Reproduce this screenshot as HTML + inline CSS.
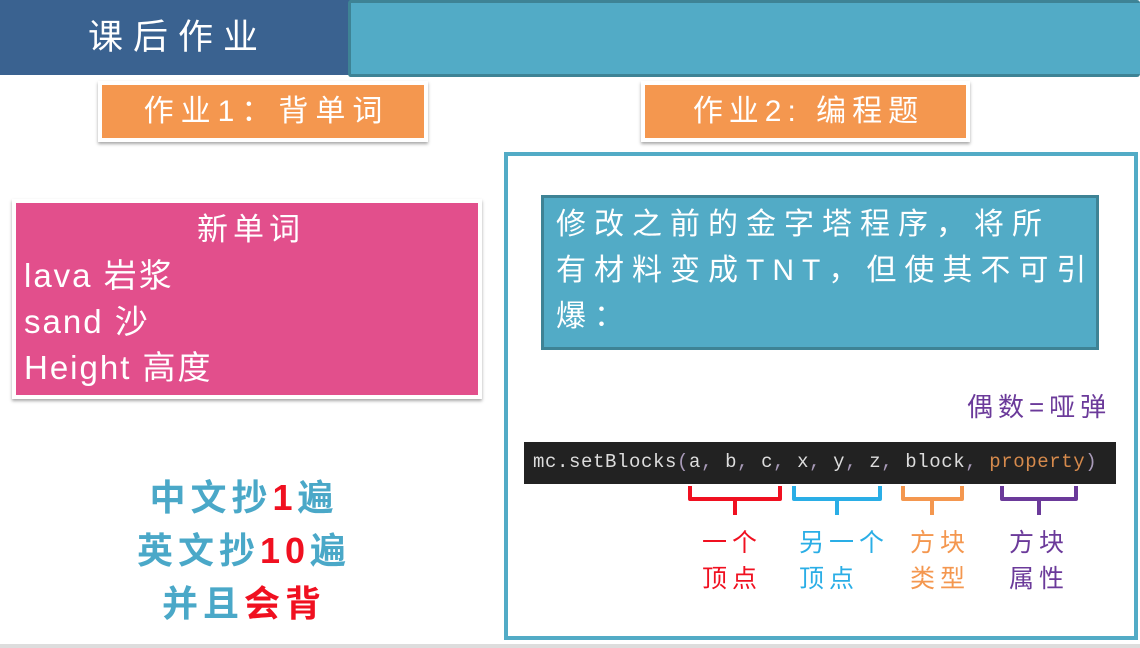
<!DOCTYPE html>
<html><head><meta charset="utf-8"><style>
*{margin:0;padding:0;box-sizing:border-box}
body{width:1140px;height:648px;position:relative;background:#fff;overflow:hidden;font-family:"Liberation Sans","Noto Sans CJK SC",sans-serif}
.a{position:absolute}
</style></head><body>
<div class="a" style="left:0;top:0;width:352px;height:75px;background:#3a6290"></div>
<div class="a" style="left:88px;top:16px;font-size:35px;color:#fff;letter-spacing:10px;line-height:44px">课后作业</div>
<div class="a" style="left:348px;top:0;width:792px;height:77px;background:#52abc6;border:3px solid #3e8395;border-right:none;border-radius:3px"></div>
<div class="a" style="left:98px;top:81px;width:330px;height:61px;background:#f4974f;border:4px solid #fff;box-shadow:0 2px 3px rgba(0,0,0,.35);color:#fff;font-size:30px;text-align:center;line-height:53px;letter-spacing:7px;padding-left:7px">作业1：背单词</div>
<div class="a" style="left:641px;top:81px;width:329px;height:61px;background:#f4974f;border:4px solid #fff;box-shadow:0 2px 3px rgba(0,0,0,.35);color:#fff;font-size:30px;text-align:center;line-height:53px;letter-spacing:6px;padding-left:6px">作业2: 编程题</div>
<div class="a" style="left:12px;top:199px;width:470px;height:200px;background:#e24f8c;border:4px solid #fff;box-shadow:0 2px 3px rgba(0,0,0,.35);color:#fff;font-size:33px;line-height:46px;padding:4px 0 0 8px;letter-spacing:2px">
<div style="text-align:center;letter-spacing:5px;font-size:31px">新单词</div>
<div>lava 岩浆</div><div>sand 沙</div><div>Height 高度</div></div>
<div class="a" style="left:-6px;top:471px;width:500px;text-align:center;font-size:36px;font-weight:bold;line-height:53px;color:#4aa8c8;letter-spacing:5px">
<div>中文抄<span style="color:#f01020">1</span>遍</div>
<div>英文抄<span style="color:#f01020">10</span>遍</div>
<div>并且<span style="color:#f01020">会背</span></div></div>
<div class="a" style="left:504px;top:152px;width:634px;height:488px;border:4px solid #52abc6"></div>
<div class="a" style="left:541px;top:195px;width:558px;height:155px;background:#52abc6;border:3px solid #3e8395;color:#fff;font-size:30px;line-height:46px;padding:4px 0 0 12px;letter-spacing:8px;white-space:nowrap">修改之前的金字塔程序，将所<br>有材料变成TNT，但使其不可引<br>爆：</div>
<div class="a" style="left:967px;top:387px;font-size:26px;color:#6b3a9a;letter-spacing:5px">偶数=哑弹</div>
<div class="a" style="left:524px;top:442px;width:592px;height:42px;background:#222;font-family:'Liberation Mono',monospace;font-size:19px;letter-spacing:0.6px;color:#ddd;line-height:40px;padding-left:9px;white-space:pre">mc.setBlocks<span style="color:#a89ab8">(</span>a<span style="color:#a89ab8">,</span> b<span style="color:#a89ab8">,</span> c<span style="color:#a89ab8">,</span> x<span style="color:#a89ab8">,</span> y<span style="color:#a89ab8">,</span> z<span style="color:#a89ab8">,</span> block<span style="color:#a89ab8">,</span> <span style="color:#d68a4c">property</span><span style="color:#a89ab8">)</span></div>
<svg class="a" style="left:0;top:0" width="1140" height="648" fill="none" stroke-width="4" stroke-linejoin="round">
<path d="M690 486v13h90v-13M735 499v16" stroke="#f01020"/>
<path d="M794 486v13h86v-13M837 499v16" stroke="#2aaee6"/>
<path d="M903 486v13h59v-13M932 499v16" stroke="#f4974f"/>
<path d="M1002 486v13h74v-13M1039 499v16" stroke="#6b3a9a"/>
</svg>
<div class="a" style="left:702px;top:525px;font-size:25px;line-height:36px;color:#f01020;letter-spacing:5px">一个<br>顶点</div>
<div class="a" style="left:799px;top:525px;font-size:25px;line-height:36px;color:#2aaee6;letter-spacing:5px">另一个<br>顶点</div>
<div class="a" style="left:910px;top:525px;font-size:25px;line-height:36px;color:#f4974f;letter-spacing:5px">方块<br>类型</div>
<div class="a" style="left:1009px;top:525px;font-size:25px;line-height:36px;color:#6b3a9a;letter-spacing:5px">方块<br>属性</div>
<div class="a" style="left:0;top:644px;width:1140px;height:4px;background:#ddd"></div>
</body></html>
